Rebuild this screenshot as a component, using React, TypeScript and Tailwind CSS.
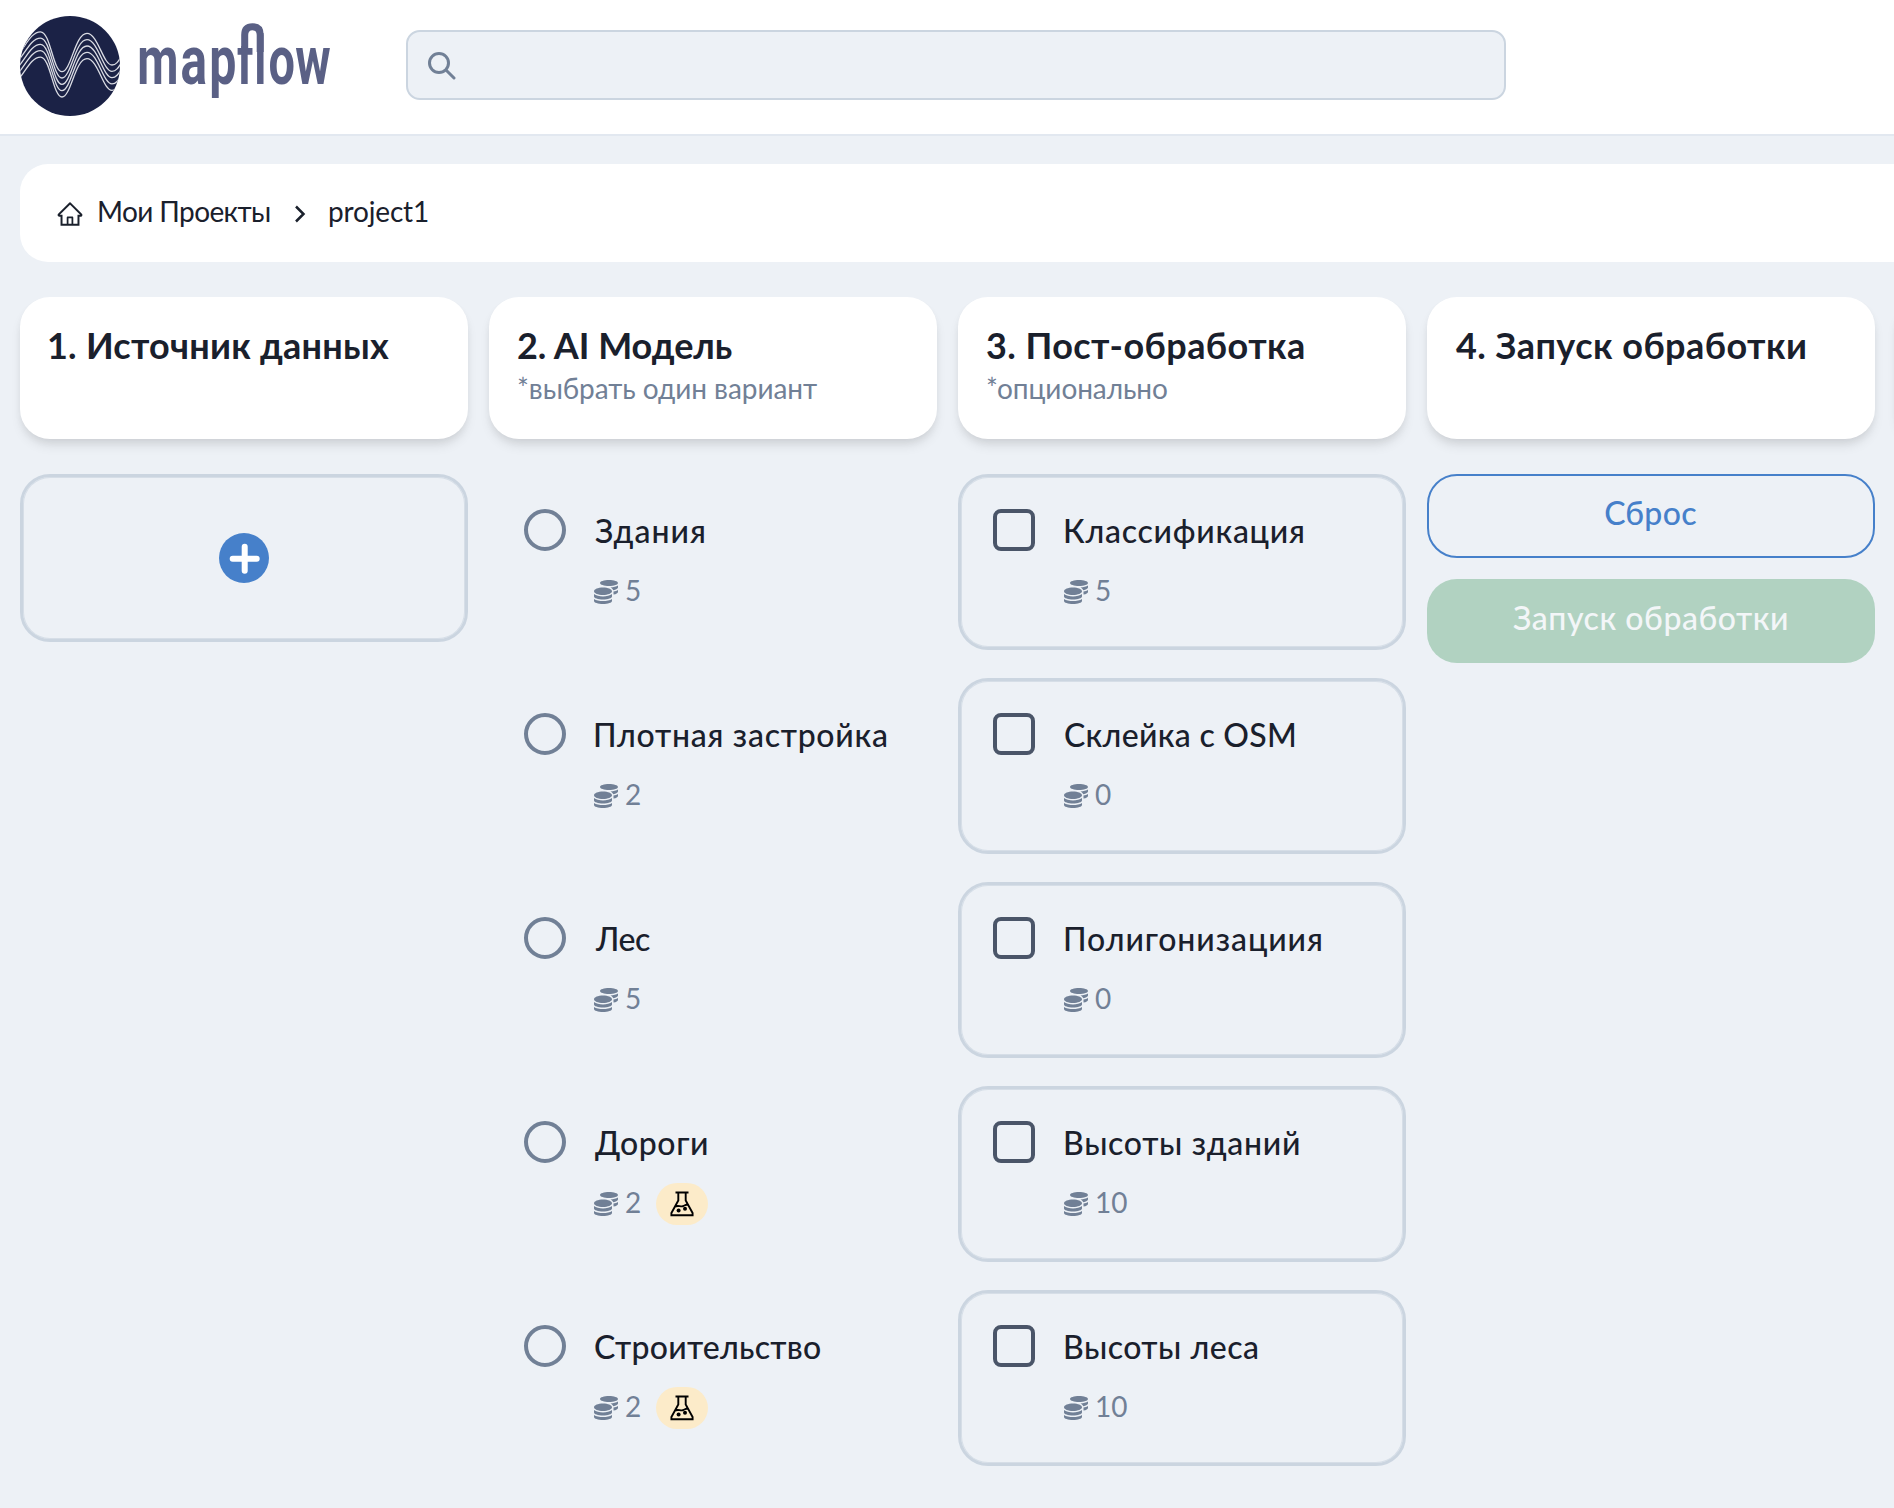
import React, { useLayoutEffect, useRef, useState } from "react";
import { AiOutlineHome } from "react-icons/ai";
import { FaCoins } from "react-icons/fa";

/** Text tracked so that its visible glyphs span exactly `width` pixels. */
function Label({ text, width, className = "" }: { text: string; width: number; className?: string }) {
  const ref = useRef<HTMLSpanElement>(null);
  const [fit, setFit] = useState({ letterSpacing: 0, marginLeft: 0 });
  useLayoutEffect(() => {
    const style = getComputedStyle(ref.current!);
    const ctx = document.createElement("canvas").getContext("2d")!;
    ctx.font = `${style.fontWeight} ${style.fontSize} ${style.fontFamily}`;
    const m = ctx.measureText(text);
    const ink = m.actualBoundingBoxLeft + m.actualBoundingBoxRight;
    setFit({ letterSpacing: (width - ink) / (text.length - 1), marginLeft: m.actualBoundingBoxLeft });
  }, [text, width]);
  return (
    <span ref={ref} className={`block whitespace-nowrap ${className}`} style={fit}>
      {text}
    </span>
  );
}

function Logo() {
  return (
    <svg width="320" height="134" viewBox="0 0 320 134" className="shrink-0" role="img" aria-label="mapflow">
      <defs>
        <clipPath id="disc">
          <circle cx="50" cy="66" r="50" />
        </clipPath>
        <clipPath id="f-body">
          <rect x="212" y="46" width="21.5" height="60" />
        </clipPath>
      </defs>
      <circle cx="50" cy="66" r="50" fill="#1b2246" />
      <g clipPath="url(#disc)" fill="none" stroke="#d9dbe3" strokeWidth="1.3">
        {[0, 6.3, 12.6, 18.9, 25.3].map((dy) => (
          <path
            key={dy}
            transform={`translate(0 ${dy})`}
            d="M-4 57C6 46 11 31.8 20.5 31.8C30.5 31.8 33 71.7 42 71.7C51 71.7 55 33.4 67 33.4C78 33.4 83 65 92 65C97 65 99 60 105 51"
          />
        ))}
      </g>
      <g fill="#5a6085" fontFamily="Roboto, sans-serif" fontWeight="700" fontSize="69">
        <text transform="translate(117.2 84) scale(0.69 1)">m</text>
        <text transform="translate(160.5 84) scale(0.72 1)">a</text>
        <text transform="translate(189.2 84) scale(0.7 1)">p</text>
        <g clipPath="url(#f-body)">
          <text transform="translate(217 84) scale(0.66 1)">f</text>
        </g>
        <text transform="translate(234.2 84) scale(0.66 1)">l</text>
        <text transform="translate(248.4 84) scale(0.68 1)">o</text>
        <text transform="translate(275.3 84) scale(0.7 1)">w</text>
      </g>
      <path d="M224.700 52V35Q224.700 26.700 232.500 26.700Q240.200 26.700 240.200 35V52" fill="none" stroke="#5a6085" strokeWidth="7" />
    </svg>
  );
}

function FlaskIcon() {
  return (
    <svg width="24" height="26" viewBox="0 0 24 26" fill="none" stroke="#000" strokeWidth="1.9">
      <path d="M5.500 1.500H18.500M8.300 1.500V9.500L1.400 22V24.300H22.600V22L15.700 9.500V1.500M4.700 15.800C8 13.600 10.500 16.200 13 15.200C15.500 14.200 16.500 13 18.300 13.600" />
      <circle cx="8.600" cy="19.500" r="2" fill="#000" stroke="none" />
      <circle cx="15" cy="17.700" r="2" fill="#000" stroke="none" />
    </svg>
  );
}

type Item = { name: string; width: number; cost: number; experimental?: boolean };

const models: Item[] = [
  { name: "Здания", width: 109, cost: 5 },
  { name: "Плотная застройка", width: 291, cost: 2 },
  { name: "Лес", width: 55, cost: 5 },
  { name: "Дороги", width: 112, cost: 2, experimental: true },
  { name: "Строительство", width: 225, cost: 2, experimental: true },
];

const postSteps: Item[] = [
  { name: "Классификация", width: 238, cost: 5 },
  { name: "Склейка с OSM", width: 229, cost: 0 },
  { name: "Полигонизациия", width: 256, cost: 0 },
  { name: "Высоты зданий", width: 234, cost: 10 },
  { name: "Высоты леса", width: 192, cost: 10 },
];

const frame = "rounded-[30px] border-[3px] border-[#cbd5e0] shadow-[inset_0_0_0_1px_#d6dee7]";

function Option({ item, kind }: { item: Item; kind: "radio" | "checkbox" }) {
  const radio = kind === "radio";
  return (
    <div className={`flex h-[176px] ${radio ? "border-[3px] border-transparent" : frame}`}>
      <span
        role={kind}
        aria-checked={false}
        className={`mt-8 ml-8 size-[42px] shrink-0 border-4 ${radio ? "rounded-full border-[#718096]" : "rounded-lg border-[#4a5568]"}`}
      />
      <div className={`pt-[34px] ${radio ? "ml-7" : "ml-[29px]"}`}>
        <Label text={item.name} width={item.width} className="pl-px text-[32px] leading-10 font-medium" />
        <div className="mt-[21px] flex h-9 items-center text-[#718096]">
          <FaCoins className="mt-1 size-6" />
          <span className="ml-[7px] text-[28px] leading-9">{item.cost}</span>
          {item.experimental && (
            <span className="mt-[3px] ml-[15px] flex h-[42px] w-[52px] items-center justify-center rounded-full bg-[#fcebc9]">
              <FlaskIcon />
            </span>
          )}
        </div>
      </div>
    </div>
  );
}

const headerCard =
  "h-[142px] rounded-[30px] bg-white px-[29px] pt-[26px] shadow-[0_8px_12px_-2px_rgba(0,0,0,0.1),0_4px_8px_-2px_rgba(0,0,0,0.06)]";

function Column({ title, width, note, noteWidth = 0, children }: { title: string; width: number; note?: string; noteWidth?: number; children?: React.ReactNode }) {
  return (
    <section className="w-[448px] shrink-0">
      <header className={headerCard}>
        <Label text={title} width={width} className="text-[36px] leading-[44px] font-bold" />
        {note && <Label text={note} width={noteWidth} className="mt-[3px] text-[28px] leading-9 text-[#718096]" />}
      </header>
      <div className="mt-[35px]">{children}</div>
    </section>
  );
}

export default function App() {
  return (
    <div className="h-[1508px] w-[1894px] overflow-hidden bg-[#edf1f6] font-['Lato',sans-serif] text-[#1a202c]">
      <div className="flex h-[136px] border-b-2 border-[#e2e8f0] bg-white pl-5">
        <Logo />
        <div className="mt-[30px] ml-[66px] flex h-[70px] w-[1100px] items-center rounded-[14px] border-2 border-[#cbd5e0] bg-[#edf1f6] pl-[19px]">
          <svg width="30" height="30" viewBox="0 0 30 30" fill="none" stroke="#718096" strokeWidth="3" strokeLinecap="round">
            <circle cx="12" cy="13" r="9.500" />
            <path d="M19.500 20.500L27 28" />
          </svg>
        </div>
      </div>

      <nav className="mt-7 ml-5 flex h-[98px] w-[1900px] items-center rounded-[28px] bg-white pl-[36px]">
        <AiOutlineHome className="mt-0.5 size-7" />
        <div className="-mt-1 ml-[15px] w-[171px]">
          <Label text="Мои Проекты" width={171} className="text-[28px] leading-9" />
        </div>
        <svg width="12" height="20" viewBox="0 0 12 20" fill="none" stroke="currentColor" strokeWidth="2.500" className="mt-0.5 ml-6">
          <path d="M2 2.500L9.500 10L2 17.500" />
        </svg>
        <div className="-mt-1 ml-[23px]">
          <Label text="project1" width={99} className="text-[28px] leading-9" />
        </div>
      </nav>

      <main className="mt-[35px] flex gap-[21px] pl-5">
        <Column title="1. Источник данных" width={340}>
          <div className={`flex h-[168px] items-center justify-center ${frame}`}>
            <svg width="50" height="50" viewBox="0 0 50 50">
              <circle cx="25" cy="25" r="25" fill="#4680ca" />
              <path d="M25.700 13.700V37.700M13.700 25.700H37.700" stroke="#fff" strokeWidth="6" strokeLinecap="round" />
            </svg>
          </div>
        </Column>
        <Column title="2. AI Модель" width={215} note="*выбрать один вариант" noteWidth={299}>
          <div className="flex flex-col gap-7">
            {models.map((m) => (
              <Option key={m.name} item={m} kind="radio" />
            ))}
          </div>
        </Column>
        <Column title="3. Пост-обработка" width={317} note="*опционально" noteWidth={180}>
          <div className="flex flex-col gap-7">
            {postSteps.map((m) => (
              <Option key={m.name} item={m} kind="checkbox" />
            ))}
          </div>
        </Column>
        <Column title="4. Запуск обработки" width={349}>
          <button className="flex h-[84px] w-full items-center justify-center rounded-[30px] border-2 border-[#4680ca] pb-[7px] font-medium text-[#4680ca]">
            <Label text="Сброс" width={91} className="text-[32px] leading-10" />
          </button>
          <button className="mt-[21px] flex h-[84px] w-full items-center justify-center rounded-[30px] bg-[#b1d2c1] pb-[7px] font-medium text-[#f3f6f8]">
            <Label text="Запуск обработки" width={274} className="text-[32px] leading-10" />
          </button>
        </Column>
        <div className={`w-[448px] shrink-0 ${headerCard}`} />
      </main>
    </div>
  );
}
